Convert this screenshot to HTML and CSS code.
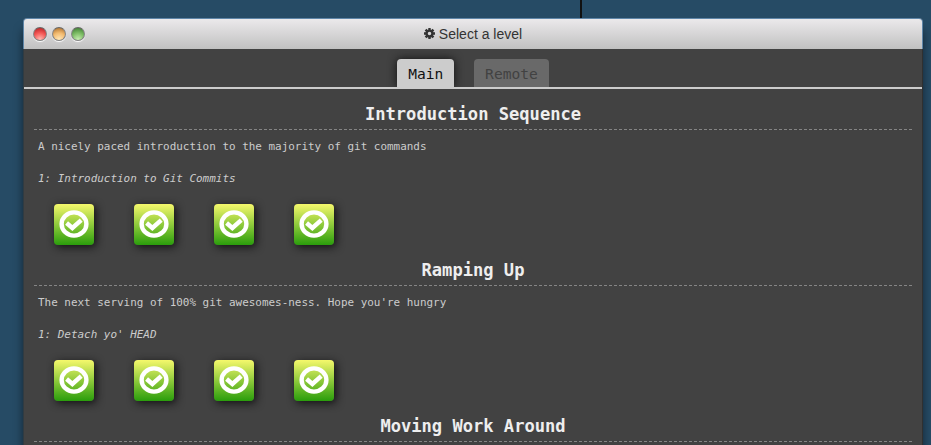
FILE: index.html
```html
<!DOCTYPE html>
<html lang="en">
<head>
<meta charset="utf-8">
<title>Select a level</title>
<link rel="stylesheet" href="styles.css">
</head>
<body>
<svg width="0" height="0" class="defs">
  <symbol id="ok" viewBox="0 0 30 28">
    <ellipse cx="15" cy="14" rx="12.4" ry="11.6" fill="none" stroke="#fff" stroke-width="4.4"/>
    <path d="M7.6 13 L13.4 18 L22.2 10.2" fill="none" stroke="#fff" stroke-width="4.4"/>
  </symbol>
</svg>
<div class="tree-line"></div>
<main class="window">
  <header class="titlebar">
    <div class="buttons"><i class="dot red"></i><i class="dot amber"></i><i class="dot green"></i></div>
    <div class="title">
      <svg class="gear" viewBox="0 0 12 12"><circle cx="6" cy="6" r="3.2" fill="none" stroke="#333" stroke-width="2.6"/><path d="M6 0V2.4M6 9.6V12M0 6H2.4M9.6 6H12M1.7 1.7L3.4 3.4M8.6 8.6L10.3 10.3M1.7 10.3L3.4 8.6M8.6 3.4L10.3 1.7" stroke="#333" stroke-width="2.6"/></svg>
      <span>Select a level</span>
    </div>
  </header>
  <nav class="tabs"><a class="tab active">Main</a><a class="tab">Remote</a></nav>
  <section class="series">
    <h2>Introduction Sequence</h2>
    <p>A nicely paced introduction to the majority of git commands</p>
    <p class="level-name">1: Introduction to Git Commits</p>
    <div class="levels"><a class="level"><svg><use href="#ok"/></svg></a><a class="level"><svg><use href="#ok"/></svg></a><a class="level"><svg><use href="#ok"/></svg></a><a class="level"><svg><use href="#ok"/></svg></a></div>
  </section>
  <section class="series">
    <h2>Ramping Up</h2>
    <p>The next serving of 100% git awesomes-ness. Hope you're hungry</p>
    <p class="level-name">1: Detach yo' HEAD</p>
    <div class="levels"><a class="level"><svg><use href="#ok"/></svg></a><a class="level"><svg><use href="#ok"/></svg></a><a class="level"><svg><use href="#ok"/></svg></a><a class="level"><svg><use href="#ok"/></svg></a></div>
  </section>
  <section class="series last">
    <h2>Moving Work Around</h2>
  </section>
</main>
</body>
</html>
```
FILE: styles.css
```css
* { box-sizing: border-box; }
html, body { height: 100%; }
body {
  margin: 0;
  padding: 18px 8px 0 23px;
  overflow: hidden;
  background: #264b65;
  font-family: "DejaVu Sans Mono", monospace;
}
.defs { position: absolute; }
.tree-line { position: absolute; left: 580px; top: 0; width: 2px; height: 18px; background: #111; }
.window {
  height: 100%;
  background: #424242;
  border-radius: 4px 4px 0 0;
  border-right: 1px solid #303030;
  border-left: 1px solid #303b42;
  box-shadow: 0 12px 10px rgba(0, 0, 0, .5);
}
.titlebar {
  display: grid;
  grid-template-columns: 1fr auto 1fr;
  align-items: center;
  height: 31px;
  margin: 0 -1px;
  padding-left: 9px;
  border: 1px solid #5f86a8;
  border-bottom: 0;
  border-radius: 4px 4px 0 0;
  background: linear-gradient(#ebe9eb, #c1c1c1);
}
.buttons { display: flex; gap: 5px; }
.dot {
  width: 14px;
  height: 14px;
  border: 1px solid #858585;
  border-top-color: #666;
  border-radius: 50%;
  box-shadow: 0 1px 1px #fff;
}
.red { background: radial-gradient(circle at 50% 95%, #ffbdb5, #f55a58 50%, #c52c2e 85%); }
.amber { background: radial-gradient(circle at 50% 95%, #ffe7b8, #f3bb70 50%, #bd803c 85%); }
.green { background: radial-gradient(circle at 50% 95%, #c6edb0, #7dbd65 50%, #4c8a3e 85%); }
.title {
  display: flex;
  align-items: center;
  gap: 4px;
  margin-left: -9px;
  color: #333;
  font: 14px/20px "Liberation Sans", Arial, sans-serif;
}
.gear { width: 11px; height: 11px; margin-top: -1px; }
.tabs {
  display: flex;
  justify-content: center;
  align-items: flex-end;
  gap: 20px;
  height: 40px;
  border-bottom: 2px solid #ccc;
}
.tab {
  height: 28px;
  padding: 0 10.9px;
  border-radius: 4px 4px 0 0;
  background: #696969;
  color: #424242;
  font-size: 14.6px;
  line-height: 29px;
}
.active { background: #ccc; color: #111; box-shadow: 0 0 10px #111; clip-path: inset(-12px -12px 0); }
.series { height: 156px; padding: 11px 10px 0; }
.last { height: 44px; }
h2 {
  height: 30px;
  margin: 0;
  border-bottom: 1px dashed #858585;
  color: #eee;
  font-size: 17.1px;
  line-height: 28px;
  text-align: center;
}
p {
  margin: 0;
  padding: 7px 4px 5px;
  color: #ccc;
  font-size: 10.95px;
  line-height: 20px;
}
.level-name { font-style: italic; }
.levels { display: flex; gap: 40px; padding: 10px 20px 0; }
.level {
  display: grid;
  place-items: center;
  width: 40px;
  height: 41px;
  border-radius: 4px;
  background: linear-gradient(#f5f86c, #2a9d0c);
  box-shadow: 2px 2px 8px #111;
}
.level svg { width: 30px; height: 28px; margin-bottom: 1px; }
```
